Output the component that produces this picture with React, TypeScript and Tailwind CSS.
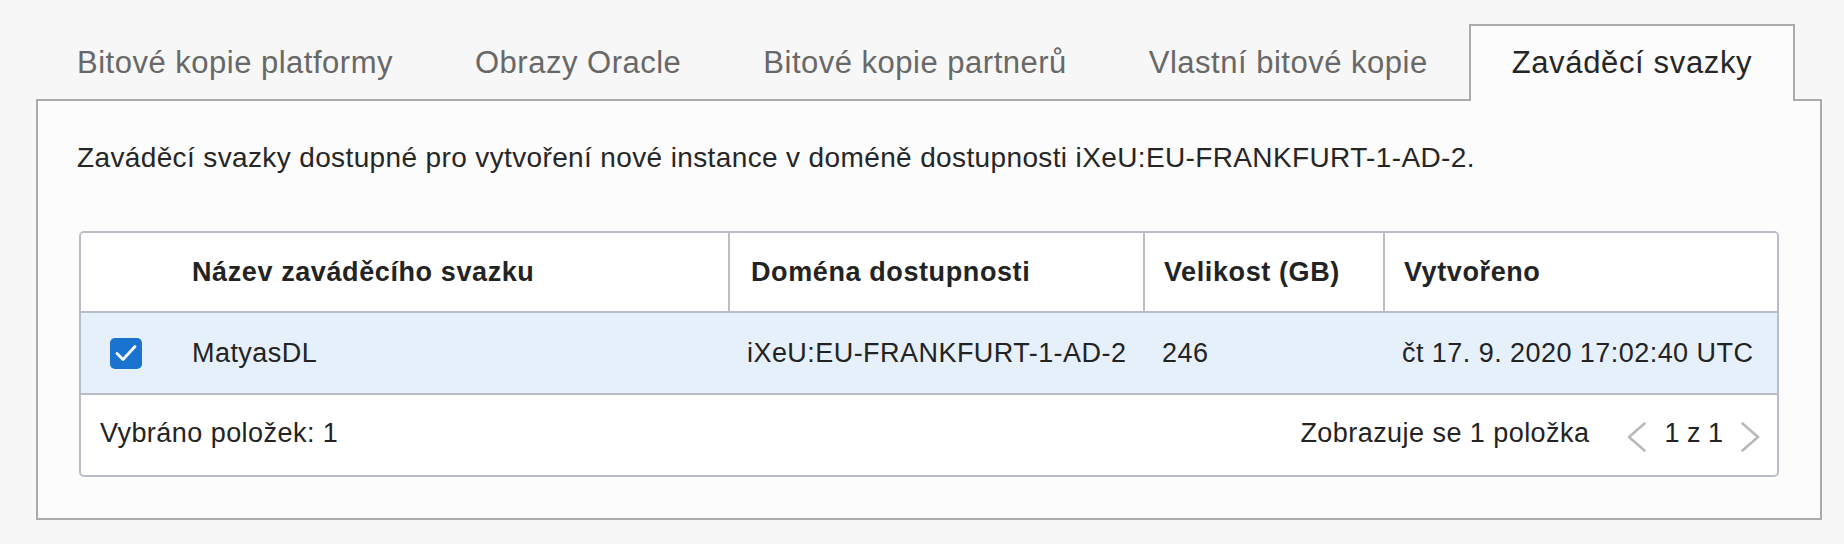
import React from "react";

const font = { fontFamily: '"Liberation Sans", Arial, Helvetica, sans-serif' };

function ChevronLeft() {
  return (
    <svg width="19" height="30" viewBox="0 0 19 30" fill="none">
      <path d="M17.5 1.5 L2 15 L17.5 28.5" stroke="#b9b9b9" strokeWidth="2.6" strokeLinecap="round" strokeLinejoin="round" />
    </svg>
  );
}

function ChevronRight() {
  return (
    <svg width="19" height="30" viewBox="0 0 19 30" fill="none">
      <path d="M1.5 1.5 L17 15 L1.5 28.5" stroke="#b9b9b9" strokeWidth="2.6" strokeLinecap="round" strokeLinejoin="round" />
    </svg>
  );
}

function Checkbox() {
  return (
    <div className="w-[32px] h-[31px] rounded-[5px] bg-[#1b73d0] flex items-center justify-center">
      <svg width="24" height="20" viewBox="0 0 24 20" fill="none">
        <path d="M3 10.5 L9 16.5 L21 3.5" stroke="#ffffff" strokeWidth="2.8" strokeLinecap="round" strokeLinejoin="round" />
      </svg>
    </div>
  );
}

export default function App() {
  const tabs = ["Bitové kopie platformy", "Obrazy Oracle", "Bitové kopie partnerů", "Vlastní bitové kopie"];
  return (
    <div className="w-[1844px] h-[544px] bg-[#f7f7f7] pt-[24px] pl-[36px]" style={font}>
      <div className="w-[1786px]">
        {/* Tabs */}
        <div className="flex h-[75px] items-stretch">
          {tabs.map((t) => (
            <div key={t} className="px-[41px] pt-[3px] flex items-center text-[31px] tracking-[0.5px] text-[#686868] whitespace-nowrap">
              {t}
            </div>
          ))}
          <div className="relative z-10 h-[77px] border-2 border-b-0 border-[#ababab] bg-[#fcfcfc] px-[41px] flex items-center text-[31px] tracking-[0.65px] text-[#262626] whitespace-nowrap">
            Zaváděcí svazky
          </div>
        </div>
        {/* Panel */}
        <div className="border-2 border-[#ababab] bg-[#fcfcfc] px-[41px] pt-[41px] pb-[41px] h-[421px]">
          <div className="text-[28px] leading-[32px] tracking-[0.37px] text-[#262626] mb-[57px] whitespace-nowrap -ml-[2px]">
            Zaváděcí svazky dostupné pro vytvoření nové instance v doméně dostupnosti iXeU:EU-FRANKFURT-1-AD-2.
          </div>
          <div className="w-[1700px] border-2 border-[#b8bdc6] rounded-[5px] bg-white overflow-hidden text-[#232323]">
            {/* Header */}
            <div className="grid grid-cols-[89px_558px_415px_240px_1fr] h-[80px] border-b-2 border-[#b8bdc6] bg-white">
              <div></div>
              <div className="pl-[22px] flex items-center font-bold text-[27px] tracking-[0.6px]">Název zaváděcího svazku</div>
              <div className="pl-[21px] flex items-center font-bold text-[27px] tracking-[0.6px] border-l-2 border-[#b8bdc6]">Doména dostupnosti</div>
              <div className="pl-[19px] flex items-center font-bold text-[27px] tracking-[0.6px] border-l-2 border-[#b8bdc6]">Velikost (GB)</div>
              <div className="pl-[19px] flex items-center font-bold text-[27px] tracking-[0.6px] border-l-2 border-[#b8bdc6]">Vytvořeno</div>
            </div>
            {/* Row */}
            <div className="grid grid-cols-[89px_558px_415px_240px_1fr] h-[82px] border-b-2 border-[#b8bdc6] bg-[#e6f0fa] text-[27px] tracking-[0.45px]">
              <div className="pl-[29px] flex items-center">
                <Checkbox />
              </div>
              <div className="pl-[22px] flex items-center">MatyasDL</div>
              <div className="pl-[19px] flex items-center whitespace-nowrap">iXeU:EU-FRANKFURT-1-AD-2</div>
              <div className="pl-[19px] flex items-center">246</div>
              <div className="pl-[19px] flex items-center whitespace-nowrap">čt 17. 9. 2020 17:02:40 UTC</div>
            </div>
            {/* Footer */}
            <div className="h-[80px] flex items-center justify-between pl-[19px] pr-[17px] text-[27px] tracking-[0.45px] pb-[3px]">
              <div>Vybráno položek: 1</div>
              <div className="flex items-center">
                <span className="mr-[38px]">Zobrazuje se 1 položka</span>
                <span className="mt-[6px]"><ChevronLeft /></span>
                <span className="mx-[18px] tracking-normal">1 z 1</span>
                <span className="mt-[6px]"><ChevronRight /></span>
              </div>
            </div>
          </div>
        </div>
      </div>
    </div>
  );
}
